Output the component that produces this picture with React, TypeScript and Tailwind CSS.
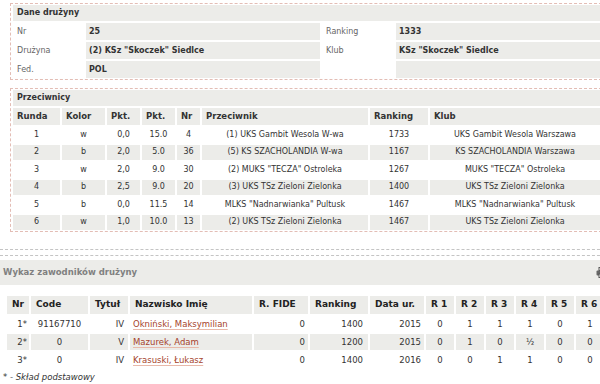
import React from "react";

const cell = "bg-[#ecece9]";

const opponents = [
  ["1", "w", "0,0", "15.0", "4", "(1) UKS Gambit Wesola W-wa", "1733", "UKS Gambit Wesola Warszawa"],
  ["2", "b", "2,0", "5.0", "36", "(5) KS SZACHOLANDIA W-wa", "1167", "KS SZACHOLANDIA Warszawa"],
  ["3", "w", "2,0", "9.0", "30", "(2) MUKS \"TECZA\" Ostroleka", "1267", "MUKS \"TECZA\" Ostroleka"],
  ["4", "b", "2,5", "9.0", "20", "(3) UKS TSz Zieloni Zielonka", "1400", "UKS TSz Zieloni Zielonka"],
  ["5", "b", "0,0", "11.5", "14", "MLKS \"Nadnarwianka\" Pultusk", "1467", "MLKS \"Nadnarwianka\" Pultusk"],
  ["6", "w", "1,0", "10.0", "13", "(2) UKS TSz Zieloni Zielonka", "1467", "UKS TSz Zieloni Zielonka"],
];

const players = [
  { nr: "1*", code: "91167710", title: "IV", name: "Okniński, Maksymilian", fide: "0", rank: "1400", born: "2015", r: ["0", "1", "1", "1", "0", "1"] },
  { nr: "2*", code: "0", title: "V", name: "Mazurek, Adam", fide: "0", rank: "1200", born: "2015", r: ["0", "1", "0", "½", "0", "0"] },
  { nr: "3*", code: "0", title: "IV", name: "Krasuski, Łukasz", fide: "0", rank: "1400", born: "2016", r: ["0", "0", "1", "1", "0", "0"] },
];

const oppHeads = ["Runda", "Kolor", "Pkt.", "Pkt.", "Nr", "Przeciwnik", "Ranking", "Klub"];
const playerHeads = ["Nr", "Code", "Tytuł", "Nazwisko Imię", "R. FIDE", "Ranking", "Data ur.", "R 1", "R 2", "R 3", "R 4", "R 5", "R 6"];

function TeamInfo() {
  const label = "flex items-center pl-1 text-[#666]";
  const value = `${cell} flex items-center pl-[3px] font-bold`;
  return (
    <div className="ml-[10px] mt-[3px] w-[592px] border border-dashed border-[#e3bdb5] p-[1px] pl-[2px]">
      <div className="grid grid-cols-[71px_234px_72px_1fr] gap-[2px]">
        <div className={`${cell} col-span-4 flex h-[16px] items-center pl-1 font-bold`}>Dane drużyny</div>
        <div className={`${label} h-[17px]`}>Nr</div>
        <div className={value}>25</div>
        <div className={label}>Ranking</div>
        <div className={value}>1333</div>
        <div className={`${label} h-[17px]`}>Drużyna</div>
        <div className={value}>(2) KSz "Skoczek" Siedlce</div>
        <div className={label}>Klub</div>
        <div className={value}>KSz "Skoczek" Siedlce</div>
        <div className={`${label} h-[17px]`}>Fed.</div>
        <div className={value}>POL</div>
        <div className={label}></div>
        <div className={value}></div>
      </div>
    </div>
  );
}

function Opponents() {
  return (
    <div className="ml-[10px] mt-[8px] w-[592px] border border-dashed border-[#e3bdb5] p-[1px] pl-[2px]">
      <div className="grid grid-cols-[47px_43px_33px_33px_23px_166px_58px_1fr] gap-x-[2px] gap-y-[2px]">
        <div className={`${cell} col-span-8 flex h-[16px] items-center pl-1 font-bold`}>Przeciwnicy</div>
        {oppHeads.map((h, i) => (
          <div key={i} className={`${cell} flex h-[17px] items-center pl-1 text-[8.5px] font-bold`}>
            {h}
          </div>
        ))}
        {opponents.map((row, ri) =>
          row.map((v, ci) => (
            <div
              key={`${ri}-${ci}`}
              className={`flex h-[15.5px] items-center justify-center ${ri % 2 === 1 ? cell : ""}`}
            >
              {v}
            </div>
          ))
        )}
      </div>
    </div>
  );
}

function Players() {
  const align = ["justify-end pr-[2px]", "justify-center", "justify-end pr-1", "justify-start pl-[3px]", "justify-end pr-[3px]", "justify-end pr-[5px]", "justify-end pr-[3px]"];
  return (
    <div className="mt-[17px]">
      <div className="w-[610px] border-t border-dashed border-[#c4c4c4]" />
      <div className="mt-[5px] w-[610px] border-t border-dashed border-[#c4c4c4]" />
      <div className="mt-[4px] flex h-[25px] w-[610px] items-center justify-between bg-[#ecece9] pl-[3px] pr-[2px]">
        <span className="text-[8.5px] font-bold text-[#808080]">Wykaz zawodników drużyny</span>
        <svg width="12" height="11" viewBox="0 0 12 11">
          <rect x="3" y="0.5" width="6" height="3" fill="none" stroke="#555" />
          <rect x="0.5" y="3.5" width="11" height="5" rx="1" fill="#666" />
          <rect x="3" y="7" width="6" height="3.5" fill="#fff" stroke="#555" />
        </svg>
      </div>
      <div className="ml-[7px] mt-[11px] grid w-[600px] grid-cols-[22px_57px_38px_122px_54px_58px_54px_28px_28px_28px_28px_28px_28px] gap-[2px] text-[8.5px]">
        {playerHeads.map((h, i) => (
          <div key={i} className={`${cell} flex h-[18px] items-center pl-[5px] text-[9px] font-bold text-[#222]`}>
            {h}
          </div>
        ))}
        {players.map((p, ri) => {
          const vals = [p.nr, p.code, p.title, p.name, p.fide, p.rank, p.born, ...p.r];
          return vals.map((v, ci) => (
            <div
              key={`${ri}-${ci}`}
              className={`flex h-[16px] items-center ${align[ci] ?? "justify-center"} ${ri === 1 ? cell : ""}`}
            >
              {ci === 3 ? (
                <a href="#" className="text-[#a5432c] underline decoration-[#e8b9aa] underline-offset-2">
                  {v}
                </a>
              ) : (
                v
              )}
            </div>
          ));
        })}
      </div>
      <div className="mt-[3px] pl-[3px] text-[8.5px] italic text-[#333]">* - Skład podstawowy</div>
    </div>
  );
}

export default function App() {
  return (
    <div className="h-[384px] w-[600px] overflow-hidden bg-white font-['DejaVu_Sans',sans-serif] text-[8px] text-[#333]">
      <TeamInfo />
      <Opponents />
      <Players />
    </div>
  );
}
